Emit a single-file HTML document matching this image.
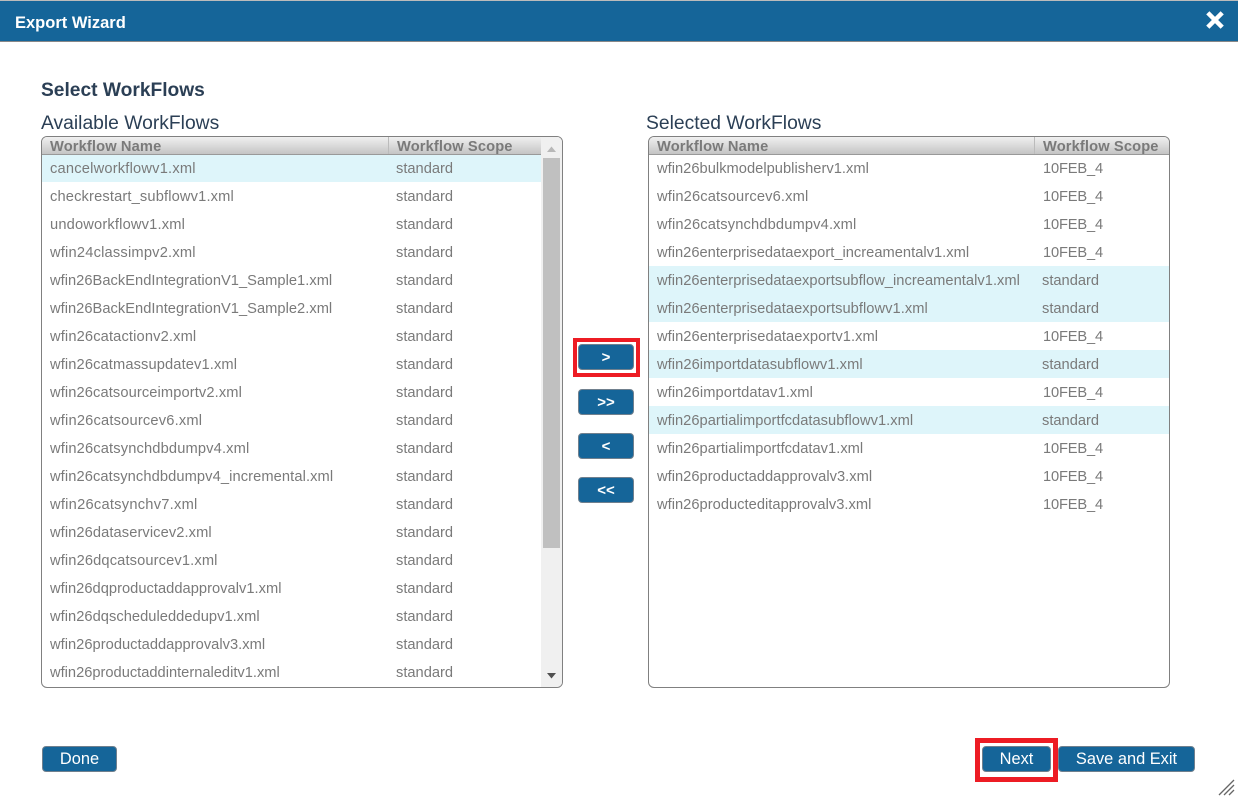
<!DOCTYPE html>
<html><head><meta charset="utf-8"><title>Export Wizard</title>
<style>
html,body{margin:0;padding:0;background:#fff}
body{width:1238px;height:802px;position:relative;overflow:hidden;font-family:"Liberation Sans",Arial,sans-serif}
.a{position:absolute;white-space:nowrap}
#hd{left:0;top:0;width:1238px;height:42px;background:#156599;border-top:1px solid #bbb;border-bottom:1px solid #888;box-sizing:border-box}
.box{position:absolute;top:136px;height:552px;box-sizing:border-box;border:1px solid #808080;border-radius:6px;overflow:hidden;background:#fff}
.th{position:absolute;left:0;top:0;right:0;height:18px;background:linear-gradient(#f0f0f0,#c4c4c4);border-bottom:1px solid #999;box-sizing:border-box;font-weight:bold;font-size:14.67px;color:#7a7a7a;line-height:20px;letter-spacing:.13px}
.th span{position:absolute;top:0}
.th i{position:absolute;top:0;bottom:0;width:1px;background:#bbb}
.r{position:absolute;left:0;height:28px;line-height:30px;font-size:14.67px;color:#7a7a7a;white-space:nowrap}
.r span{position:absolute;top:0}
.hl{background:#def5fa}
.t{letter-spacing:-.15px}
.btn{position:absolute;box-sizing:border-box;background:#156599;border:1px solid #70808e;border-radius:4px;color:#fff;text-align:center;white-space:nowrap}
.sm{left:578px;width:56px;height:26px;font-size:15px;font-weight:bold;line-height:25px}
.lg{top:746px;height:26px;font-size:16.4px;line-height:25px}
.red{position:absolute;box-sizing:border-box;border:4px solid #ed1c24}
</style></head><body>
<div class="a" id="hd"></div>
<div class="a" style="left:15px;top:14px;font-size:16.5px;font-weight:bold;color:#fff;line-height:18px">Export Wizard</div>
<svg class="a" style="left:1205px;top:10px" width="20" height="20" viewBox="0 0 20 20"><path d="M2.800 2.800L17.200 17.200M17.200 2.800L2.800 17.200" stroke="#fff" stroke-width="4.500" fill="none"/></svg>
<div class="a" style="left:41px;top:80px;font-size:19.2px;font-weight:bold;color:#2b3f55;line-height:22px">Select WorkFlows</div>
<div class="a" style="left:41px;top:113px;font-size:19.3px;color:#2b3f55;line-height:22px">Available WorkFlows</div>
<div class="a" style="left:646px;top:113px;font-size:19.3px;color:#2b3f55;line-height:22px">Selected WorkFlows</div>

<div class="box" style="left:41px;width:522px">
<div class="th"><span style="left:8px">Workflow Name</span><i style="left:346px"></i><span style="left:355px">Workflow Scope</span></div>
<div class="r hl" style="top:18px;width:500px;height:27px;line-height:29px"><span style="left:8px;letter-spacing:.2px">cancelworkflowv1.xml</span><span style="left:354px">standard</span></div>
<div class="r" style="top:45px;width:500px"><span style="left:8px;letter-spacing:.15px">checkrestart_subflowv1.xml</span><span style="left:354px">standard</span></div>
<div class="r" style="top:73px;width:500px"><span style="left:8px;letter-spacing:.17px">undoworkflowv1.xml</span><span style="left:354px">standard</span></div>
<div class="r" style="top:101px;width:500px"><span style="left:8px;letter-spacing:.2px">wfin24classimpv2.xml</span><span style="left:354px">standard</span></div>
<div class="r" style="top:129px;width:500px"><span style="left:8px;letter-spacing:.03px">wfin26BackEndIntegrationV1_Sample1.xml</span><span style="left:354px">standard</span></div>
<div class="r" style="top:157px;width:500px"><span style="left:8px;letter-spacing:.03px">wfin26BackEndIntegrationV1_Sample2.xml</span><span style="left:354px">standard</span></div>
<div class="r" style="top:185px;width:500px"><span style="left:8px;letter-spacing:.14px">wfin26catactionv2.xml</span><span style="left:354px">standard</span></div>
<div class="r" style="top:213px;width:500px"><span style="left:8px;letter-spacing:.12px">wfin26catmassupdatev1.xml</span><span style="left:354px">standard</span></div>
<div class="r" style="top:241px;width:500px"><span style="left:8px;letter-spacing:.11px">wfin26catsourceimportv2.xml</span><span style="left:354px">standard</span></div>
<div class="r" style="top:269px;width:500px"><span style="left:8px;letter-spacing:.19px">wfin26catsourcev6.xml</span><span style="left:354px">standard</span></div>
<div class="r" style="top:297px;width:500px"><span style="left:8px;letter-spacing:.15px">wfin26catsynchdbdumpv4.xml</span><span style="left:354px">standard</span></div>
<div class="r" style="top:325px;width:500px"><span style="left:8px;letter-spacing:.1px">wfin26catsynchdbdumpv4_incremental.xml</span><span style="left:354px">standard</span></div>
<div class="r" style="top:353px;width:500px"><span style="left:8px;letter-spacing:.25px">wfin26catsynchv7.xml</span><span style="left:354px">standard</span></div>
<div class="r" style="top:381px;width:500px"><span style="left:8px;letter-spacing:.09px">wfin26dataservicev2.xml</span><span style="left:354px">standard</span></div>
<div class="r" style="top:409px;width:500px"><span style="left:8px;letter-spacing:.13px">wfin26dqcatsourcev1.xml</span><span style="left:354px">standard</span></div>
<div class="r" style="top:437px;width:500px"><span style="left:8px;letter-spacing:.03px">wfin26dqproductaddapprovalv1.xml</span><span style="left:354px">standard</span></div>
<div class="r" style="top:465px;width:500px"><span style="left:8px;letter-spacing:.04px">wfin26dqscheduleddedupv1.xml</span><span style="left:354px">standard</span></div>
<div class="r" style="top:493px;width:500px"><span style="left:8px;letter-spacing:.03px">wfin26productaddapprovalv3.xml</span><span style="left:354px">standard</span></div>
<div class="r" style="top:521px;width:500px"><span style="left:8px">wfin26productaddinternaleditv1.xml</span><span style="left:354px">standard</span></div>
<div style="position:absolute;left:499px;top:0;width:21px;bottom:0;background:#f0f0f0"></div>
<div style="position:absolute;left:501px;top:21px;width:17px;height:390px;background:#c0c0c0"></div>
<svg style="position:absolute;left:499px;top:0" width="21" height="20"><path d="M6 15L15 15L10.500 9.500Z" fill="#b8b8b8"/></svg>
<svg style="position:absolute;left:499px;top:530px" width="21" height="20"><path d="M6 6L15 6L10.500 11.500Z" fill="#505050"/></svg>
</div>

<div class="box" style="left:648px;width:522px">
<div class="th"><span style="left:8px">Workflow Name</span><i style="left:385px"></i><span style="left:394px">Workflow Scope</span></div>
<div class="r" style="top:18px;width:520px;height:27px;line-height:29px"><span style="left:8px;letter-spacing:.03px">wfin26bulkmodelpublisherv1.xml</span><span class="t" style="left:394px">10FEB_4</span></div>
<div class="r" style="top:45px;width:520px"><span style="left:8px;letter-spacing:.15px">wfin26catsourcev6.xml</span><span class="t" style="left:394px">10FEB_4</span></div>
<div class="r" style="top:73px;width:520px"><span style="left:8px;letter-spacing:.15px">wfin26catsynchdbdumpv4.xml</span><span class="t" style="left:394px">10FEB_4</span></div>
<div class="r" style="top:101px;width:520px"><span style="left:8px;letter-spacing:.02px">wfin26enterprisedataexport_increamentalv1.xml</span><span class="t" style="left:394px">10FEB_4</span></div>
<div class="r hl" style="top:129px;width:520px"><span style="left:8px;letter-spacing:.04px">wfin26enterprisedataexportsubflow_increamentalv1.xml</span><span style="left:393px">standard</span></div>
<div class="r hl" style="top:157px;width:520px"><span style="left:8px;letter-spacing:.05px">wfin26enterprisedataexportsubflowv1.xml</span><span style="left:393px">standard</span></div>
<div class="r" style="top:185px;width:520px"><span style="left:8px;letter-spacing:.06px">wfin26enterprisedataexportv1.xml</span><span class="t" style="left:394px">10FEB_4</span></div>
<div class="r hl" style="top:213px;width:520px"><span style="left:8px;letter-spacing:.07px">wfin26importdatasubflowv1.xml</span><span style="left:393px">standard</span></div>
<div class="r" style="top:241px;width:520px"><span style="left:8px;letter-spacing:.09px">wfin26importdatav1.xml</span><span class="t" style="left:394px">10FEB_4</span></div>
<div class="r hl" style="top:269px;width:520px"><span style="left:8px;letter-spacing:.03px">wfin26partialimportfcdatasubflowv1.xml</span><span style="left:393px">standard</span></div>
<div class="r" style="top:297px;width:520px"><span style="left:8px;letter-spacing:.03px">wfin26partialimportfcdatav1.xml</span><span class="t" style="left:394px">10FEB_4</span></div>
<div class="r" style="top:325px;width:520px"><span style="left:8px;letter-spacing:.03px">wfin26productaddapprovalv3.xml</span><span class="t" style="left:394px">10FEB_4</span></div>
<div class="r" style="top:353px;width:520px"><span style="left:8px;letter-spacing:.03px">wfin26producteditapprovalv3.xml</span><span class="t" style="left:394px">10FEB_4</span></div>
</div>

<div class="red" style="left:573px;top:338px;width:67px;height:39px"></div>
<div class="btn sm" style="top:344px">&gt;</div>
<div class="btn sm" style="top:389px">&gt;&gt;</div>
<div class="btn sm" style="top:433px">&lt;</div>
<div class="btn sm" style="top:477px">&lt;&lt;</div>

<div class="btn lg" style="left:42px;width:75px">Done</div>
<div class="red" style="left:975px;top:738px;width:83px;height:44px;border-width:5px"></div>
<div class="btn lg" style="left:982px;width:69px">Next</div>
<div class="btn lg" style="left:1058px;width:137px">Save and Exit</div>
<svg class="a" style="left:1218px;top:779px" width="18" height="18"><path d="M1 16L16 1M6 16L16 6M11 16L16 11" stroke="#666" stroke-width="1.300" fill="none"/></svg>
</body></html>
